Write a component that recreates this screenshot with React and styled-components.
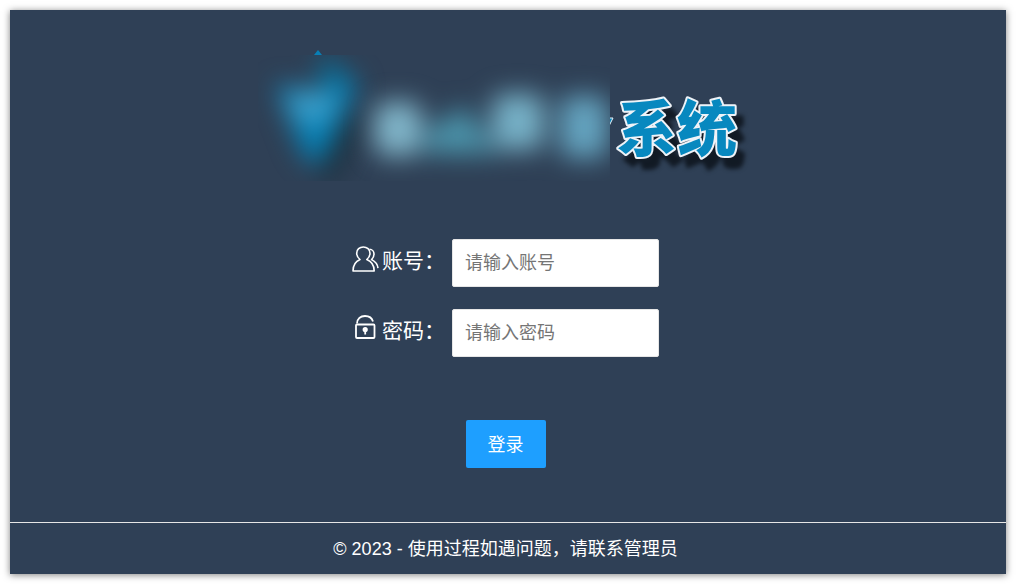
import React from "react";
import styled, { createGlobalStyle } from "styled-components";

const GlobalStyle = createGlobalStyle`
  *, *::before, *::after { box-sizing: border-box; }
  body {
    margin: 0;
    background: #fff;
    color: #fff;
    font-family: "Liberation Sans", "Noto Sans CJK SC", sans-serif;
    font-size: 18px;
  }
`;

const Page = styled.div`
  display: flex;
  min-height: 100vh;
  padding: 10px;
`;

const Panel = styled.div`
  flex: 1;
  display: flex;
  flex-direction: column;
  background: #2f4056;
  box-shadow: 0 1px 7px rgba(0, 0, 0, 0.5);
`;

const Main = styled.main`
  flex: 1;
  display: flex;
  flex-direction: column;
  align-items: center;
  padding: 30px 0 54px;
`;

const Heading = styled.h1`
  margin: 0;
  line-height: 0;
`;

const LogoText = styled.text`
  font-family: "Noto Sans CJK SC", sans-serif;
  font-size: 60px;
  font-weight: 900;
  filter: drop-shadow(7px 11px 2px rgba(8, 13, 20, 0.75));
`;

const Form = styled.form`
  display: flex;
  flex-direction: column;
  align-items: center;
  gap: 22px;
  margin-top: 49px;
  padding-right: 5px;
`;

const Row = styled.div`
  display: flex;
  align-items: flex-start;
`;

const Label = styled.label`
  display: flex;
  align-items: center;
  gap: 3px;
  width: 100px;
  height: 40px;
  font-size: 21px;
  white-space: nowrap;
`;

const Input = styled.input`
  width: 207px;
  height: 48px;
  padding: 0 12px;
  border: 1px solid #e6e6e6;
  border-radius: 2px;
  background: #fff;
  color: #333;
  font: inherit;
  &::placeholder { color: #757575; opacity: 1; }
`;

const Button = styled.button`
  height: 48px;
  margin-top: 41px;
  padding: 0 22px 2px;
  border: 0;
  border-radius: 2px;
  background: #1e9fff;
  color: #fff;
  font: inherit;
  cursor: pointer;
`;

const Footer = styled.footer`
  padding: 1px 5px 0 0;
  border-top: 1px solid #e6e6e6;
  line-height: 50px;
  text-align: center;
`;

function Logo() {
  return (
    <svg width="500" height="150" viewBox="258 40 500 150" role="img" aria-label="系统">
      <defs>
        <filter id="soft" x="-60%" y="-60%" width="220%" height="220%" colorInterpolationFilters="sRGB">
          <feGaussianBlur stdDeviation="13" />
        </filter>
        <clipPath id="veil"><rect x="258" y="55" width="352" height="126" /></clipPath>
        <clipPath id="clear"><rect x="610" y="40" width="148" height="150" /></clipPath>
      </defs>
      <path d="M318 50l4 5h-8z" fill="#087fb5" />
      <g clipPath="url(#veil)">
        <g filter="url(#soft)">
          <path d="M348 112L362 122L334 184L318 178Z" fill="#12262f" opacity=".7" />
          <path d="M322 50L360 88L318 118Z" fill="#0a6c94" />
          <path d="M276 84L322 92L356 76L346 112L318 168L302 152Z" fill="#0580b5" />
          <path d="M284 92L338 92L328 122L296 122Z" fill="#3c9fcb" />
        </g>
        <g filter="url(#soft)">
          <rect x="374" y="102" width="48" height="54" rx="14" fill="#80b4c8" />
          <path d="M464 106L498 154H426V132Z" fill="#4b93aa" />
          <rect x="492" y="94" width="52" height="56" rx="12" fill="#76b0c6" />
          <rect x="560" y="96" width="48" height="62" rx="12" fill="#64a3bf" />
        </g>
      </g>
      <g clipPath="url(#clear)">
        <path d="M609 118l4 0-4 8z" fill="#0a86bd" stroke="#e9f2f8" strokeWidth="1" />
      </g>
      <LogoText
        x="617" y="151" fill="#0788bf" stroke="#eef3f8" strokeWidth="4"
        strokeLinejoin="round" paintOrder="stroke"
      >系统</LogoText>
    </svg>
  );
}

function UserIcon() {
  return (
    <svg width="27" height="28" viewBox="0 0 27 28" fill="none" stroke="#fff" strokeWidth="1.6" strokeLinejoin="round" aria-hidden="true">
      <path d="M8 14.500C5.500 12.500 4.700 10 4.700 8.200C4.700 4.500 7.600 2 11.300 2S18 4.500 18 8.200C18 10 17.200 12.500 14.800 14.500C18.500 16 22.200 19.500 22.200 26H1C1 19.500 4.500 16 8 14.500Z" />
      <path d="M17.500 4.200C20.200 4.200 22 6.500 22 9C22 11.200 21 13.300 19.600 14.600C22.600 16 25.500 18.500 26 23.200" />
    </svg>
  );
}

function LockIcon() {
  return (
    <svg width="27" height="28" viewBox="0 0 27 28" fill="none" stroke="#fff" strokeWidth="1.800" aria-hidden="true">
      <rect x="4" y="9.500" width="18.500" height="13.500" rx="1" />
      <path d="M5 8.500C5.200 3.800 8.500 1 13 1C16.800 1 20 3 21 6.500" />
      <circle cx="13.200" cy="14.500" r="1.700" fill="#fff" />
      <path d="M13.200 15v4.500" />
    </svg>
  );
}

export default function App() {
  return (
    <>
      <GlobalStyle />
      <Page>
        <Panel>
          <Main>
            <Heading><Logo /></Heading>
            <Form onSubmit={(e) => e.preventDefault()}>
              <Row>
                <Label htmlFor="account"><UserIcon />账号：</Label>
                <Input id="account" type="text" placeholder="请输入账号" />
              </Row>
              <Row>
                <Label htmlFor="password"><LockIcon />密码：</Label>
                <Input id="password" type="password" placeholder="请输入密码" />
              </Row>
              <Button type="submit">登录</Button>
            </Form>
          </Main>
          <Footer>© 2023 - 使用过程如遇问题，请联系管理员</Footer>
        </Panel>
      </Page>
    </>
  );
}
